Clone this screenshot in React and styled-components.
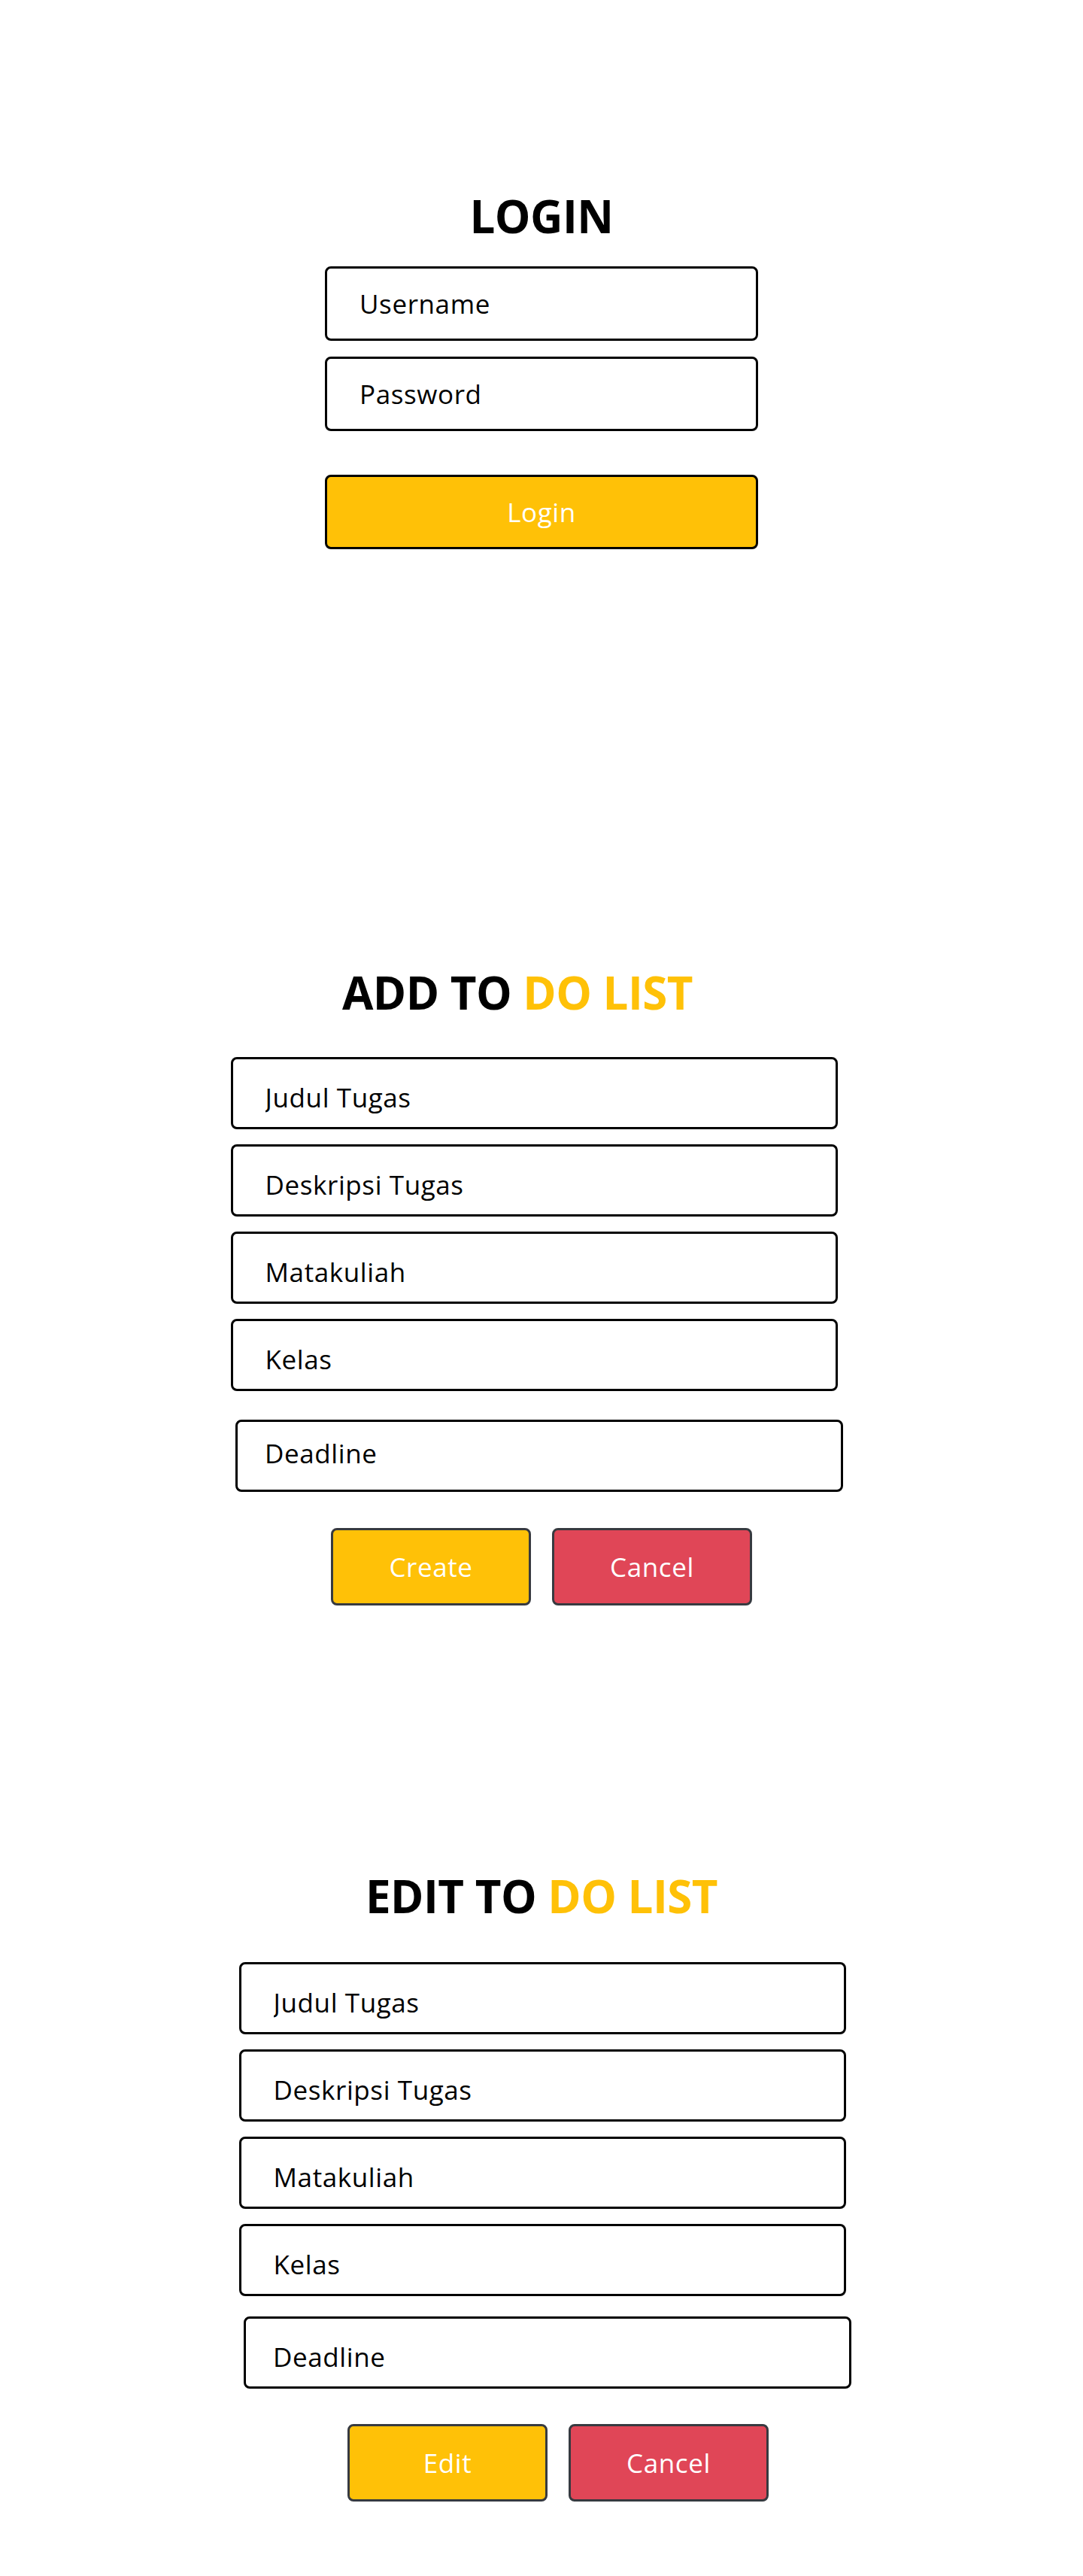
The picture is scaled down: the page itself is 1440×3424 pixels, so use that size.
import React from "react";
import styled, { createGlobalStyle } from "styled-components";

// centred items get nudged sideways by a few px, like the reference
const nudge = (p) => {
  const d = (p.$shift || 0) * 2;
  return `margin-left: ${Math.max(0, d)}px; margin-right: ${Math.max(0, -d)}px;`;
};

const App = () => {
  return (
    <Page>
      <GlobalStyle />

      <Section>
        <Title $gap={37}>LOGIN</Title>
        <Stack $gap={21}>
          <Field $w={576} $h={99} placeholder="Username" />
          <Field $w={576} $h={99} type="password" placeholder="Password" />
        </Stack>
        <LoginButton>Login</LoginButton>
      </Section>

      <Section $top={559}>
        <Title $gap={56} $shift={-32}>
          ADD TO <Accent>DO LIST</Accent>
        </Title>
        <Stack $gap={20} $shift={-10}>
          <Field $pt={10} placeholder="Judul Tugas" />
          <Field $pt={10} placeholder="Deskripsi Tugas" />
          <Field $pt={10} placeholder="Matakuliah" />
          <Field $pt={10} placeholder="Kelas" />
        </Stack>
        <DateField $top={38} $shift={-3} $pb={7} placeholder="Deadline" />
        <ButtonRow $top={48}>
          <Button $variant="warning">Create</Button>
          <Button $variant="danger">Cancel</Button>
        </ButtonRow>
      </Section>

      <Section $top={356}>
        <Title $gap={58}>
          EDIT TO <Accent>DO LIST</Accent>
        </Title>
        <Stack $gap={20} $shift={1}>
          <Field $pt={10} placeholder="Judul Tugas" />
          <Field $pt={10} placeholder="Deskripsi Tugas" />
          <Field $pt={10} placeholder="Matakuliah" />
          <Field $pt={10} placeholder="Kelas" />
        </Stack>
        <DateField $top={27} $shift={8} $pt={11} placeholder="Deadline" />
        <ButtonRow $top={47} $shift={22}>
          <Button $variant="warning">Edit</Button>
          <Button $variant="danger">Cancel</Button>
        </ButtonRow>
      </Section>
    </Page>
  );
};

export default App;

// styles
const GlobalStyle = createGlobalStyle`
  html, body {
    margin: 0;
    padding: 0;
    background: #fff;
  }
  body {
    font-family: "Open Sans", "Liberation Sans", sans-serif;
    color: #000;
  }
  * {
    box-sizing: border-box;
  }
`;

const Page = styled.div`
  width: 1440px;
  min-height: 3424px;
  padding: 257px 0 99px;
  display: flex;
  flex-direction: column;
`;

const Section = styled.section`
  display: flex;
  flex-direction: column;
  align-items: center;
  margin-top: ${(p) => p.$top || 0}px;
`;

const Title = styled.h1`
  margin: 0 0 ${(p) => p.$gap}px;
  height: 60px;
  font-size: 60px;
  line-height: 60px;
  font-weight: 700;
  letter-spacing: -0.5px;
  color: #000;
  white-space: nowrap;
  ${nudge}
`;

const Accent = styled.span`
  color: #ffc107;
`;

const Stack = styled.div`
  display: flex;
  flex-direction: column;
  gap: ${(p) => p.$gap}px;
  ${nudge}
`;

const Field = styled.input`
  display: block;
  width: ${(p) => p.$w || 807}px;
  height: ${(p) => p.$h || 96}px;
  padding: ${(p) => p.$pt || 0}px 12px ${(p) => p.$pb || 0}px ${(p) => p.$pl || 43}px;
  border: 3px solid #000;
  border-radius: 8px;
  background: #fff;
  font-family: "Open Sans", "Liberation Sans", sans-serif;
  font-size: 35px;
  letter-spacing: 0.6px;
  color: #000;
  outline: none;

  &::placeholder {
    color: #000;
    opacity: 1;
  }
`;

const DateField = styled(Field).attrs({ $w: 808, $pl: 36 })`
  margin-top: ${(p) => p.$top}px;
  ${nudge}
`;

const LoginButton = styled.button`
  margin-top: 58px;
  width: 576px;
  height: 99px;
  border: 3px solid #000;
  border-radius: 8px;
  background: #ffc107;
  color: #fff;
  font-family: "Open Sans", "Liberation Sans", sans-serif;
  font-size: 35px;
  letter-spacing: 0.6px;
  cursor: pointer;
`;

const ButtonRow = styled.div`
  display: flex;
  gap: 28px;
  margin-top: ${(p) => p.$top}px;
  ${nudge}
`;

const Button = styled.button`
  width: 266px;
  height: 103px;
  border: 3px solid #373a40;
  border-radius: 8px;
  background: ${(p) => (p.$variant === "danger" ? "#e04657" : "#ffc107")};
  color: #fff;
  font-family: "Open Sans", "Liberation Sans", sans-serif;
  font-size: 35px;
  letter-spacing: 0.6px;
  cursor: pointer;
`;
